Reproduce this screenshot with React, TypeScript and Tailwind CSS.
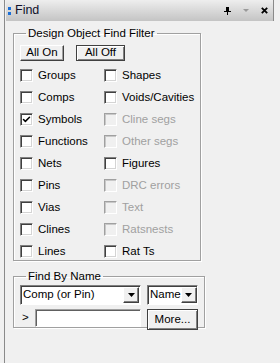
import { Check } from 'lucide-react';

const font = { fontFamily: '"Liberation Sans", Arial, sans-serif' };

interface Item {
  label: string;
  checked?: boolean;
  disabled?: boolean;
}

const leftItems: Item[] = [
  { label: 'Groups' },
  { label: 'Comps' },
  { label: 'Symbols', checked: true },
  { label: 'Functions' },
  { label: 'Nets' },
  { label: 'Pins' },
  { label: 'Vias' },
  { label: 'Clines' },
  { label: 'Lines' },
];

const rightItems: Item[] = [
  { label: 'Shapes' },
  { label: 'Voids/Cavities' },
  { label: 'Cline segs', disabled: true },
  { label: 'Other segs', disabled: true },
  { label: 'Figures' },
  { label: 'DRC errors', disabled: true },
  { label: 'Text', disabled: true },
  { label: 'Ratsnests', disabled: true },
  { label: 'Rat Ts' },
];

function CheckBox({ checked, disabled }: { checked?: boolean; disabled?: boolean }) {
  return (
    <span
      className={
        disabled
          ? 'w-[13px] h-[13px] shrink-0 flex items-center justify-center border border-t-[#a0a0a0] border-l-[#a0a0a0] border-b-white border-r-white bg-[#f0f0f0] shadow-[inset_1px_1px_0_#c8c8c8]'
          : 'w-[13px] h-[13px] shrink-0 flex items-center justify-center border border-t-[#808080] border-l-[#808080] border-b-white border-r-white bg-white shadow-[inset_1px_1px_0_#404040,inset_-1px_-1px_0_#d4d4d4]'
      }
    >
      {checked && <Check className="w-[9px] h-[9px] text-black" strokeWidth={4} />}
    </span>
  );
}

function CheckRow({ item }: { item: Item }) {
  return (
    <div className="h-[17px] flex items-center gap-[5px]">
      <CheckBox checked={item.checked} disabled={item.disabled} />
      <span className={item.disabled ? 'text-[11.5px] leading-none text-[#a0a0a0]' : 'text-[11.5px] leading-none text-black'}>
        {item.label}
      </span>
    </div>
  );
}

function DropArrow() {
  return (
    <span className="w-[16px] h-full shrink-0 flex items-center justify-center bg-[#f0f0f0] border border-t-white border-l-white border-b-[#404040] border-r-[#404040] shadow-[inset_-1px_-1px_0_#808080]">
      <svg width="7" height="4" viewBox="0 0 7 4">
        <path d="M0 0h7L3.5 4z" fill="#000" />
      </svg>
    </span>
  );
}

export default function App() {
  return (
    <div className="w-[280px] h-[363px] bg-[#f0f0f0] pl-[4px] overflow-hidden" style={font}>
      <div className="h-full border-l border-[#8a8a8a] flex flex-col">
        <div className="ml-[1px] w-[268px] h-[21px] flex items-center bg-gradient-to-b from-[#eeeeee] to-[#c4c4c4] border-r border-[#8a8a8a]">
          <div className="ml-[2px] flex flex-col gap-[2px]">
            <span className="w-[3px] h-[3px] bg-[#1a6fd8]" />
            <span className="w-[3px] h-[3px] bg-[#1a6fd8]" />
          </div>
          <span className="ml-[4px] text-[12.5px] text-[#10102a]">Find</span>
          <div className="ml-auto mr-[5px] flex items-center gap-[12px]">
            <svg width="7" height="8" viewBox="0 0 7 8">
              <path d="M2 0h3v4h-3zM0 4h7v1H0zM3 5h1v3H3z" fill="#000" />
            </svg>
            <svg width="6" height="3" viewBox="0 0 6 3">
              <path d="M0 0h6L3 3z" fill="#9a9a9a" />
            </svg>
            <svg width="7" height="7" viewBox="0 0 7 7">
              <path d="M0.8 0.8l5.4 5.4M6.2 0.8l-5.4 5.4" stroke="#000" strokeWidth="1.8" />
            </svg>
          </div>
        </div>

        <div className="pl-[8px] pt-[5px]">
          <fieldset className="w-[188px] border border-[#a0a0a0] shadow-[inset_1px_1px_0_white,1px_1px_0_white] px-[6px] pb-0">
            <legend className="ml-[6px] px-[2px] text-[11.5px] leading-[15px] text-black">Design Object Find Filter</legend>
            <div className="flex gap-[12px] mt-[4px]">
              <button className="w-[44px] h-[16px] flex items-center justify-center text-[11.5px] leading-none bg-[#f0f0f0] border border-t-white border-l-white border-b-[#404040] border-r-[#404040] shadow-[inset_-1px_-1px_0_#a0a0a0]">
                All On
              </button>
              <button className="w-[49px] h-[16px] flex items-center justify-center text-[11.5px] leading-none bg-[#f0f0f0] border border-[#404040] shadow-[inset_1px_1px_0_white,inset_-1px_-1px_0_#808080]">
                All Off
              </button>
            </div>
            <div className="grid grid-cols-[84px_1fr] mt-[6px]">
              <div className="flex flex-col gap-[5px]">
                {leftItems.map((item) => (
                  <CheckRow key={item.label} item={item} />
                ))}
              </div>
              <div className="flex flex-col gap-[5px]">
                {rightItems.map((item) => (
                  <CheckRow key={item.label} item={item} />
                ))}
              </div>
            </div>
          </fieldset>

          <fieldset className="w-[188px] mt-[8px] border border-[#a0a0a0] shadow-[inset_1px_1px_0_white,1px_1px_0_white] px-[6px] pb-0">
            <legend className="ml-[6px] px-[2px] text-[11.5px] leading-[15px] text-black">Find By Name</legend>
            <div className="flex gap-[6px] mt-[1px]">
              <div className="w-[121px] h-[20px] flex items-center bg-white border border-t-[#808080] border-l-[#808080] border-b-white border-r-white shadow-[inset_1px_1px_0_#404040] p-[1px] pl-[2px]">
                <span className="flex-1 text-[11.5px] leading-none text-black">Comp (or Pin)</span>
                <DropArrow />
              </div>
              <div className="w-[51px] h-[20px] flex items-center bg-white border border-t-[#808080] border-l-[#808080] border-b-white border-r-white shadow-[inset_1px_1px_0_#404040] p-[1px] pl-[2px]">
                <span className="flex-1 text-[11.5px] leading-none text-black">Name</span>
                <DropArrow />
              </div>
            </div>
            <div className="flex items-start gap-[6px] mt-[4px] -mb-[3px]">
              <div className="w-[121px] flex items-center">
                <span className="w-[15px] pl-[2px] text-[11.5px] leading-none text-black">&gt;</span>
                <div className="flex-1 h-[18px] bg-white border border-t-[#a0a0a0] border-l-[#a0a0a0] border-b-white border-r-white shadow-[inset_1px_1px_0_#606060]" />
              </div>
              <button className="w-[51px] h-[21px] flex items-center justify-center text-[11.5px] leading-none bg-[#f0f0f0] border border-[#404040] shadow-[inset_1px_1px_0_white,inset_-1px_-1px_0_#808080]">
                More...
              </button>
            </div>
          </fieldset>
        </div>
      </div>
    </div>
  );
}
